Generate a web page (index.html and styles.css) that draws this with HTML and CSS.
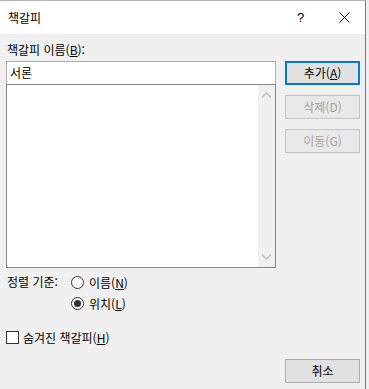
FILE: index.html
```html
<!DOCTYPE html>
<html lang="ko">
<head>
<meta charset="utf-8">
<title>책갈피</title>
<link rel="stylesheet" href="styles.css">
</head>
<body>
<div class="window">
  <div class="titlebar">
    <span class="title">책갈피</span>
    <span class="help">?</span>
    <span class="close">
      <svg width="11" height="11" viewBox="0 0 11 11"><path d="M0.5 0.5 L10.5 10.5 M10.5 0.5 L0.5 10.5" stroke="#000" stroke-width="1" fill="none"/></svg>
    </span>
  </div>
  <div class="body">
    <div class="main">
      <div class="left">
        <div class="label">책갈피 이름(<u>B</u>):</div>
        <div class="input">서론</div>
        <div class="list">
          <div class="list-area"></div>
          <div class="scrollbar">
            <svg width="17" height="17" viewBox="0 0 17 17"><path d="M4 10.5 L8.5 6 L13 10.5" stroke="#c2c2c2" stroke-width="1.6" fill="none"/></svg>
            <svg width="17" height="17" viewBox="0 0 17 17"><path d="M4 6.5 L8.5 11 L13 6.5" stroke="#c2c2c2" stroke-width="1.6" fill="none"/></svg>
          </div>
        </div>
        <div class="sort">
          <div class="sort-label">정렬 기준:</div>
          <div class="radios">
            <div class="opt"><span class="radio"></span><span>이름(<u>N</u>)</span></div>
            <div class="opt"><span class="radio checked"></span><span>위치(<u>L</u>)</span></div>
          </div>
        </div>
        <div class="opt check-row"><span class="checkbox"></span><span>숨겨진 책갈피(<u>H</u>)</span></div>
      </div>
      <div class="right">
        <div class="btn default">추가(<u>A</u>)</div>
        <div class="btn disabled">삭제(D)</div>
        <div class="btn disabled">이동(G)</div>
      </div>
    </div>
    <div class="footer">
      <div class="btn">취소</div>
    </div>
  </div>
</div>
</body>
</html>
```
FILE: styles.css
```css
html, body {
  margin: 0;
  padding: 0;
  background: #f0f0f0;
}
body {
  font-family: "Noto Sans CJK KR", "Noto Sans", sans-serif;
  font-size: 12px;
  line-height: 16px;
  color: #000;
}
u { text-decoration: underline; text-underline-offset: 1px; }
.window {
  width: 366px;
  height: 389px;
  border-top: 1px solid #b4b4b4;
  border-right: 1px solid #7a7a7a;
  background: #f0f0f0;
  box-sizing: border-box;
}
.titlebar {
  height: 33px;
  background: #fff;
  display: flex;
  align-items: center;
}
.title {
  padding-left: 8px;
  flex: 1;
  font-size: 12px;
}
.help {
  width: 10px;
  margin-right: 32px;
  font-family: "Liberation Sans", sans-serif;
  font-size: 13px;
}
.close {
  width: 11px;
  height: 11px;
  margin-right: 15px;
  display: flex;
}
.body {
  padding: 8px 5px 0 6px;
}
.main {
  display: flex;
  gap: 9px;
}
.left {
  width: 272px;
}
.label {
  padding-left: 1px;
  height: 16px;
  margin-bottom: 3px;
}
.input {
  height: 24px;
  box-sizing: border-box;
  border: 1px solid #acacac;
  background: #fff;
  padding: 3px 3px;
  line-height: 16px;
}
.list {
  margin-top: -1px;
  height: 184px;
  box-sizing: border-box;
  border: 1px solid #828790;
  background: #fff;
  display: flex;
}
.list-area { flex: 1; }
.scrollbar {
  width: 17px;
  background: #f0f0f0;
  display: flex;
  flex-direction: column;
  justify-content: space-between;
  padding: 2px 0;
}
.sort {
  display: flex;
  margin-top: 4px;
}
.sort-label {
  width: 64px;
  padding-left: 1px;
  height: 21px;
  line-height: 19px;
}
.radios { display: flex; flex-direction: column; }
.opt {
  display: flex;
  align-items: center;
  height: 21px;
  gap: 5px;
}
.radio {
  width: 13px;
  height: 13px;
  box-sizing: border-box;
  border: 1px solid #333;
  border-radius: 50%;
  background: #fff;
  display: flex;
  align-items: center;
  justify-content: center;
}
.radio.checked::after {
  content: "";
  width: 7px;
  height: 7px;
  border-radius: 50%;
  background: #333;
}
.check-row {
  margin-top: 13px;
  gap: 4px;
}
.checkbox {
  width: 13px;
  height: 13px;
  box-sizing: border-box;
  border: 1px solid #333;
  background: #fff;
}
.right {
  width: 75px;
  display: flex;
  flex-direction: column;
  gap: 10px;
  padding-top: 19px;
}
.btn {
  height: 24px;
  width: 75px;
  box-sizing: border-box;
  border: 1px solid #adadad;
  background: #e1e1e1;
  display: flex;
  align-items: center;
  justify-content: center;
}
.btn.default {
  border: 2px solid #0078d7;
}
.btn.disabled {
  background: #e8e8e8;
  border-color: #c4c4c4;
  color: #a3a3a3;
}
.footer {
  display: flex;
  justify-content: flex-end;
  margin-top: 11px;
}
```
